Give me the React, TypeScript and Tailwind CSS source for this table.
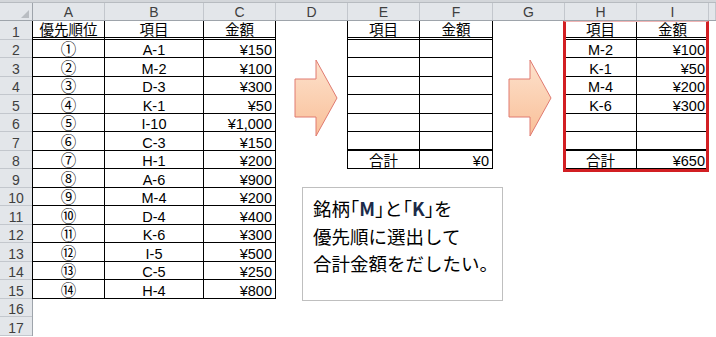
import React from "react";

const font = "font-['Liberation_Sans','Noto_Sans_CJK_JP','Noto_Sans_CJK_SC',sans-serif]";
const jpFont = "font-['Noto_Sans_CJK_JP','Noto_Sans_CJK_SC',sans-serif]";

const rowHeights = [19, 18, 19, 18, 19, 18, 19, 18, 19, 18, 19, 18, 19, 18, 19, 18, 19];
const hClass = (h: number) => (h === 19 ? "h-[19px]" : "h-[18px]");

const columns = [
  { label: "A", w: "w-[72px]" },
  { label: "B", w: "w-[99px]" },
  { label: "C", w: "w-[72px]" },
  { label: "D", w: "w-[72px]" },
  { label: "E", w: "w-[72px]" },
  { label: "F", w: "w-[73px]" },
  { label: "G", w: "w-[72px]" },
  { label: "H", w: "w-[72px]" },
  { label: "I", w: "w-[72px]" },
  { label: "", w: "flex-1" },
];

const priorities: [string, string, string][] = [
  ["①", "A-1", "¥150"],
  ["②", "M-2", "¥100"],
  ["③", "D-3", "¥300"],
  ["④", "K-1", "¥50"],
  ["⑤", "I-10", "¥1,000"],
  ["⑥", "C-3", "¥150"],
  ["⑦", "H-1", "¥200"],
  ["⑧", "A-6", "¥900"],
  ["⑨", "M-4", "¥200"],
  ["⑩", "D-4", "¥400"],
  ["⑪", "K-6", "¥300"],
  ["⑫", "I-5", "¥500"],
  ["⑬", "C-5", "¥250"],
  ["⑭", "H-4", "¥800"],
];

type Cell = { text: string; align: "center" | "right"; big?: boolean };

function Row({
  cells,
  widths,
  height,
  bottom,
}: {
  cells: Cell[];
  widths: string[];
  height: number;
  bottom: "thin" | "double" | "thick";
}) {
  const b =
    bottom === "double"
      ? "border-b-[3px] border-double pt-[2px]"
      : bottom === "thick"
        ? "border-b-2 pt-[2px]"
        : "border-b pt-[3px]";
  return (
    <div className={`flex ${hClass(height)}`}>
      {cells.map((c, i) => (
        <div
          key={i}
          className={`${widths[i]} ${b} border-r border-black flex items-center leading-[14px] text-black ${
            c.big ? "text-[15.5px]" : "text-[14.5px]"
          } ${c.align === "right" ? "justify-end pr-[3px]" : "justify-center"}`}
        >
          {c.text}
        </div>
      ))}
    </div>
  );
}

function Arrow({ id, className }: { id: string; className: string }) {
  return (
    <svg className={className} width="44" height="78" viewBox="-1 -1 44 78">
      <defs>
        <linearGradient id={id} x1="0" y1="0" x2="0" y2="1">
          <stop offset="0" stopColor="#fde2cd" />
          <stop offset="1" stopColor="#f9bf98" />
        </linearGradient>
      </defs>
      <path
        d="M0 19 L21 19 L21 0 L42 38 L21 76 L21 57 L0 57 Z"
        fill={`url(#${id})`}
        stroke="#e07a70"
        strokeWidth="1"
      />
    </svg>
  );
}

export default function App() {
  const smallRows = (data: [string, string][]) => {
    const rows: Cell[][] = [
      [
        { text: "項目", align: "center" },
        { text: "金額", align: "center" },
      ],
    ];
    for (let i = 0; i < 6; i++) {
      const d = data[i];
      rows.push([
        { text: d ? d[0] : "", align: "center" },
        { text: d ? d[1] : "", align: "right" },
      ]);
    }
    return rows;
  };

  const table2 = smallRows([]);
  table2.push([
    { text: "合計", align: "center" },
    { text: "¥0", align: "right" },
  ]);
  const table3 = smallRows([
    ["M-2", "¥100"],
    ["K-1", "¥50"],
    ["M-4", "¥200"],
    ["K-6", "¥300"],
  ]);
  table3.push([
    { text: "合計", align: "center" },
    { text: "¥650", align: "right" },
  ]);

  const table1: Cell[][] = [
    [
      { text: "優先順位", align: "center" },
      { text: "項目", align: "center" },
      { text: "金額", align: "center" },
    ],
    ...priorities.map(
      ([a, b, c]) =>
        [
          { text: a, align: "center", big: true },
          { text: b, align: "center" },
          { text: c, align: "right" },
        ] as Cell[],
    ),
  ];

  const bottomFor = (i: number, small: boolean) =>
    i === 0 ? "double" : small && i === 6 ? "thick" : "thin";

  return (
    <div className={`w-[716px] h-[337px] overflow-hidden bg-white relative ${font}`}>
      <div className="h-[3px] bg-[#d3d6da] border-b border-[#b7bbc0]" />

      {/* column headers */}
      <div className="flex h-[18px] bg-[#e3e6ea] border-b border-[#9ea4ab]">
        <div className="w-[33px] border-r border-[#9ea4ab] flex items-end justify-end pr-[3px] pb-[2px]">
          <svg width="8" height="8" viewBox="0 0 8 8">
            <polygon points="8,0 8,8 0,8" fill="#b9bdc2" />
          </svg>
        </div>
        {columns.map((c, i) => (
          <div
            key={i}
            className={`${c.w} border-r border-[#c3c7cd] flex items-center justify-center text-[14px] leading-[14px] text-[#3f3f3f]`}
          >
            {c.label}
          </div>
        ))}
      </div>

      <div className="flex">
        {/* row headers */}
        <div className="w-[33px] flex flex-col bg-[#e3e6ea] border-r border-[#9ea4ab]">
          {rowHeights.map((h, i) => (
            <div
              key={i}
              className={`${hClass(h)} border-b border-[#c3c7cd] flex items-center justify-center pt-[3px] text-[14px] leading-[14px] text-[#3f3f3f]`}
            >
              {i + 1}
            </div>
          ))}
        </div>

        {/* sheet */}
        <div className="flex-1 relative grid grid-cols-[72px_99px_72px_72px_72px_73px_72px_72px_72px_1fr] grid-rows-[19px_18px_19px_18px_19px_18px_19px_18px_19px_18px_19px_18px_19px_18px_19px_18px_19px] content-start">
          <div className="col-start-1 col-span-3 row-start-1 row-span-15 flex flex-col -ml-[1px] border-l border-black">
            {table1.map((cells, i) => (
              <Row
                key={i}
                cells={cells}
                widths={["w-[72px]", "w-[99px]", "w-[72px]"]}
                height={rowHeights[i]}
                bottom={bottomFor(i, false)}
              />
            ))}
          </div>

          <div className="col-start-5 col-span-2 row-start-1 row-span-8 flex flex-col -ml-[1px] border-l border-black">
            {table2.map((cells, i) => (
              <Row
                key={i}
                cells={cells}
                widths={["w-[72px]", "w-[73px]"]}
                height={rowHeights[i]}
                bottom={bottomFor(i, true)}
              />
            ))}
          </div>

          <div className="col-start-8 col-span-2 row-start-1 row-span-8 flex flex-col relative -ml-[1px] border-l border-black">
            {table3.map((cells, i) => (
              <Row
                key={i}
                cells={cells}
                widths={["w-[72px]", "w-[72px]"]}
                height={rowHeights[i]}
                bottom={bottomFor(i, true)}
              />
            ))}
            {/* red frame shape */}
            <div className="absolute -left-[2px] top-0 w-[146px] h-[151px] border-[3px] border-t border-[#d21f23] border-t-[#f0b4b4] pointer-events-none" />
          </div>
        </div>
      </div>

      {/* floating shapes */}
      <Arrow id="arrowA" className="absolute left-[294px] top-[59px]" />
      <Arrow id="arrowB" className="absolute left-[508px] top-[59px]" />

      <div className={`absolute left-[302px] top-[187px] w-[201px] h-[114px] border border-[#bfbfbf] bg-white pl-[10px] pt-[7px] text-[18.5px] leading-[27.5px] text-black ${jpFont}`}>
        <div>
          銘柄｢<span className="font-semibold text-[#1c2b4a]">M</span>｣と｢<span className="font-semibold text-[#1c2b4a]">K</span>｣を
        </div>
        <div>優先順に選出して</div>
        <div>合計金額をだしたい。</div>
      </div>
    </div>
  );
}
